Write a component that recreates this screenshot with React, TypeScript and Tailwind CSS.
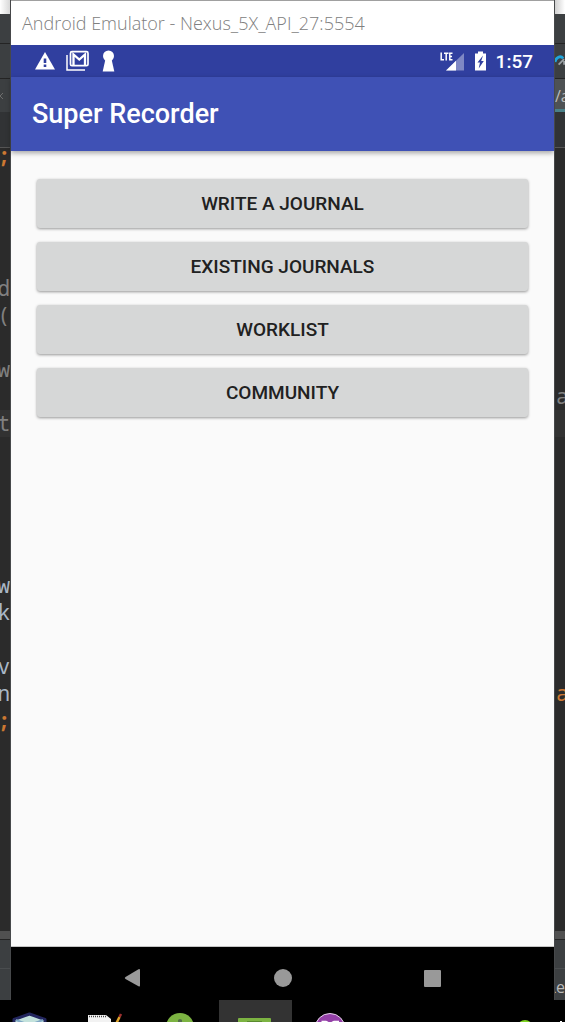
import React from "react";

const CODE_ROWS = 24;

type Glyph = { ch: string; tone: string };

const GREY = "text-[#808080]";
const PALE = "text-[#a9b7c6]";
const ORANGE = "text-[#cc7832]";

const leftCode: Record<number, Glyph> = {
  0: { ch: "d", tone: GREY },
  1: { ch: "(", tone: GREY },
  3: { ch: "w", tone: GREY },
  5: { ch: "t", tone: GREY },
  11: { ch: "w", tone: PALE },
  12: { ch: "k", tone: PALE },
  14: { ch: "v", tone: PALE },
  15: { ch: "n", tone: PALE },
  16: { ch: ";", tone: `${ORANGE} font-bold` },
};

const rightCode: Record<number, Glyph> = {
  4: { ch: "a", tone: GREY },
  15: { ch: "a", tone: ORANGE },
};

function EditorEdge({ side }: { side: "left" | "right" }) {
  const left = side === "left";
  const code = left ? leftCode : rightCode;
  const align = left ? "justify-end" : "justify-start pl-px";
  return (
    <div
      aria-hidden="true"
      className={`flex w-[11px] shrink-0 flex-col overflow-hidden bg-[#2b2b2b] font-['Noto_Sans_Mono','DejaVu_Sans_Mono',monospace] text-[21px] ${
        left ? "border-r border-[#46484a]" : "border-l border-[#46484a]"
      }`}
    >
      <div
        className={`h-[14px] shrink-0 ${
          left ? "bg-linear-to-r from-white to-[#d8d8d8]" : "bg-linear-to-l from-white to-[#d0d0d0]"
        }`}
      />
      <div className="h-[30px] shrink-0 border-b border-[#242424] bg-[#3c3f41]" />
      <div className="flex h-[35px] shrink-0 items-center border-b border-[#242424] bg-[#3c3f41]">
        {!left && (
          <svg viewBox="0 0 11 14" className="h-[14px] w-[11px]" fill="none">
            <path d="M0 8C1 3 6 0.500 9 4" stroke="#1fa5dc" strokeWidth="3" />
            <path d="M4 11L10 5M10 11V7" stroke="#9aa0a4" strokeWidth="2" />
          </svg>
        )}
      </div>
      {left ? (
        <div className="flex h-[33px] shrink-0 items-center bg-[#3c3f41]">
          <svg viewBox="0 0 10 8" className="h-2 w-[10px]" fill="none" stroke="#6e6e6e">
            <path d="M-3 1L3 7M3 1L-3 7" />
          </svg>
        </div>
      ) : (
        <div className="flex h-[33px] shrink-0 items-center overflow-hidden border-b-3 border-[#4a8088] bg-[#4e5254] pt-1 font-['Open_Sans',sans-serif] text-base text-[#bbbbbb]">
          /a
        </div>
      )}
      <div className="h-9 shrink-0 border-b border-[#555555] bg-[#313335]" />
      <div className={`flex h-4 shrink-0 items-center font-bold ${align} ${ORANGE}`}>{left ? ";" : ""}</div>
      <div className="h-[111px] shrink-0" />
      {Array.from({ length: CODE_ROWS }, (_, i) => (
        <div
          key={i}
          className={`flex h-[27px] shrink-0 items-center ${align} ${i === 5 ? "bg-[#323232]" : ""} ${
            code[i] ? code[i].tone : ""
          }`}
        >
          {code[i] ? code[i].ch : ""}
        </div>
      ))}
      <div className="flex-1" />
      <div className="h-2 shrink-0 bg-[#505050]" />
      <div className="h-[30px] shrink-0 border-y border-t-[#242424] border-b-[#4a4d4f] bg-[#3c3f41]" />
      <div className="flex h-[31px] shrink-0 items-center justify-end bg-[#3c3f41] pt-1 font-['Open_Sans',sans-serif] text-base text-[#bbbbbb]">
        {left ? "" : "Le"}
      </div>
    </div>
  );
}

function StatusBar() {
  return (
    <div className="flex h-8 items-center justify-between bg-[#303f9f] pr-[21px] pl-[23px] text-white">
      <div className="flex items-center gap-[10px]">
        <svg viewBox="0 0 22 20" className="h-5 w-[22px]">
          <path d="M11 1L21 18.500H1Z" fill="white" />
          <path d="M9.700 7.500H12.300V12H9.700ZM9.700 13.500H12.300V16H9.700Z" fill="#303f9f" />
        </svg>
        <svg viewBox="0 0 24 22" className="h-[22px] w-6" fill="none" stroke="white">
          <path d="M1 5V20H19" strokeWidth="1.500" />
          <rect x="4.500" y="1.700" width="17.500" height="14" rx="1.500" strokeWidth="1.700" />
          <path d="M7.500 15V4.500L13.300 9.500L19 4.500V15" strokeWidth="2.300" />
        </svg>
        <svg viewBox="0 0 18 22" className="h-[22px] w-[18px]" fill="white">
          <circle cx="8.500" cy="6" r="5.500" />
          <path d="M5.500 9H11.500L14.300 21.500H2.700Z" />
        </svg>
      </div>
      <div className="flex items-center gap-[10px]">
        <svg viewBox="0 0 25 20" className="h-5 w-[25px]">
          <path d="M24 2V19.500H6Z" fill="#7f88c4" />
          <path d="M16 9.700V19.500H6Z" fill="white" />
          <path
            d="M1.200 1.500V8.800H4M4 2.200H8.500M6.200 2.200V9.500M12.500 2.200H9.800V8.800H12.500M9.800 5.500H12"
            fill="none"
            stroke="white"
            strokeWidth="1.500"
          />
        </svg>
        <svg viewBox="0 0 11 20" className="h-5 w-[11px]">
          <path d="M3 0.500H8V2.500H11V19.500H0V2.500H3Z" fill="white" />
          <path d="M8 4.500L2.500 11.500H5L3.700 17.500L8.800 10H6.200Z" fill="#303f9f" />
        </svg>
        <time className="pt-px text-[19px] leading-6 font-medium">1:57</time>
      </div>
    </div>
  );
}

const actions = ["Write a Journal", "Existing Journals", "Worklist", "Community"];

function NavigationBar() {
  return (
    <nav className="flex h-[54px] items-center justify-center gap-[124px] border-t border-[#c4c4c4] bg-black pt-[9px]">
      <button aria-label="Back" className="flex size-[26px] items-center justify-center">
        <svg viewBox="0 0 26 26" className="size-[26px]" fill="#999999">
          <path d="M20 5.500V20.500Q20 22 18.500 21.200L5.500 14Q4 13 5.500 12L18.500 4.200Q20 3.500 20 5.500Z" />
        </svg>
      </button>
      <button aria-label="Home" className="flex size-[26px] items-center justify-center">
        <span className="size-[18px] rounded-full bg-[#999999]" />
      </button>
      <button aria-label="Overview" className="flex size-[26px] items-center justify-center">
        <span className="size-[17px] rounded-[1px] bg-[#999999]" />
      </button>
    </nav>
  );
}

function Emulator() {
  return (
    <section className="flex min-w-0 flex-1 flex-col bg-[#fafafa] font-[Roboto,sans-serif]">
      <header className="flex h-[45px] items-center border-t border-[#a0a0a0] bg-white px-[11px] font-['Open_Sans',sans-serif] text-[18px] font-light text-[#808080]">
        <span className="truncate">Android Emulator - Nexus_5X_API_27:5554</span>
      </header>
      <StatusBar />
      <div className="flex h-[74px] items-center bg-[#3f51b5] px-[21px] pt-px shadow-[0_2px_5px_rgba(0,0,0,0.35)]">
        <h1 className="text-[27px] font-medium text-white">Super Recorder</h1>
      </div>
      <main className="flex flex-1 flex-col gap-[14px] px-[26px] pt-7">
        {actions.map((label) => (
          <button
            key={label}
            className="h-[49px] w-full rounded-[3px] bg-[#d6d7d7] pt-px text-[19px] font-medium text-[#212121] uppercase shadow-[0_1px_3px_rgba(0,0,0,0.4)]"
          >
            {label}
          </button>
        ))}
      </main>
      <NavigationBar />
    </section>
  );
}

function Taskbar() {
  return (
    <footer className="flex h-[22px] justify-between overflow-hidden bg-black">
      <div className="flex">
        <button aria-label="VirtualBox">
          <svg viewBox="0 0 73 22" className="h-[22px] w-[73px]">
            <path d="M14 19.500L29.500 14L45 19.500V30H14Z" fill="#c3e2dc" stroke="#23265e" strokeWidth="3" strokeLinejoin="round" />
            <path d="M16 20L29.500 25L43 20" fill="none" stroke="#7fa7c4" strokeWidth="2" />
          </svg>
        </button>
        <button aria-label="Notepad">
          <svg viewBox="0 0 73 22" className="h-[22px] w-[73px]">
            <path d="M15 15H33L38 19V30H15Z" fill="#f2f2f2" />
            <path d="M16 16.500H33" stroke="#444444" strokeWidth="1.500" strokeDasharray="1 1" />
            <path d="M46.500 17L43 24" stroke="#e0a52b" strokeWidth="2.500" />
            <path d="M48 14L46.500 17" stroke="#9c3030" strokeWidth="2.500" />
          </svg>
        </button>
        <button aria-label="Android Studio">
          <svg viewBox="0 0 73 22" className="h-[22px] w-[73px]">
            <circle cx="34" cy="27" r="14" fill="#7cb342" />
            <path d="M32 22V20Q34 18 36 20V22Z" fill="#546e4a" />
          </svg>
        </button>
        <button aria-label="Android Emulator" className="bg-[#333333]">
          <svg viewBox="0 0 73 22" className="h-[22px] w-[73px]">
            <rect x="19" y="18" width="33" height="10" rx="1" fill="#7cb342" />
            <path d="M28 21.500H43" stroke="#5a8a2f" />
          </svg>
        </button>
        <button aria-label="Messenger">
          <svg viewBox="0 0 73 22" className="h-[22px] w-[73px]">
            <circle cx="38" cy="28.500" r="15" fill="#9440a8" stroke="#e8d5ec" />
            <path d="M29.500 21.500H34L36 22.500M47 21.500H42L40 22.500" fill="none" stroke="white" strokeWidth="1.500" />
          </svg>
        </button>
      </div>
      <svg viewBox="0 0 60 22" className="h-[22px] w-[60px]">
        <circle cx="20" cy="28" r="8" fill="#7ed321" />
        <path d="M56 22V21" stroke="white" strokeWidth="2" />
      </svg>
    </footer>
  );
}

export default function App() {
  return (
    <div className="flex min-h-screen flex-col bg-black">
      <div className="flex flex-1">
        <EditorEdge side="left" />
        <Emulator />
        <EditorEdge side="right" />
      </div>
      <Taskbar />
    </div>
  );
}
